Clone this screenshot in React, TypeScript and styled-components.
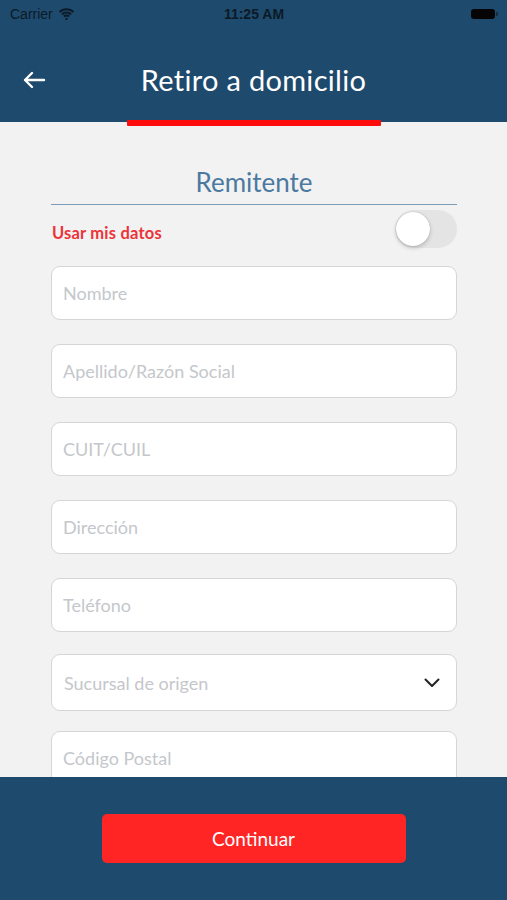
import React, { useState } from 'react';
import styled, { createGlobalStyle } from 'styled-components';

const GlobalStyle = createGlobalStyle`
  html, body {
    margin: 0;
    padding: 0;
    background: #f2f2f2;
  }
  * {
    box-sizing: border-box;
  }
`;

const Screen = styled.div`
  width: 100%;
  height: 100vh;
  display: flex;
  flex-direction: column;
  overflow: hidden;
  font-family: Lato, "Open Sans", sans-serif;
  background: #f2f2f2;
`;

const Header = styled.header`
  position: relative;
  background: #1e4a6e;
  height: 122px;
  flex-shrink: 0;
`;

const StatusBar = styled.div`
  height: 28px;
  display: grid;
  grid-template-columns: 1fr auto 1fr;
  align-items: center;
  padding: 0 9px 0 10px;
  font-family: "Liberation Sans", Arial, sans-serif;
  font-size: 14px;
  color: #0b1a26;
`;

const Carrier = styled.div`
  display: flex;
  align-items: center;
  gap: 5px;
`;

const Clock = styled.div`
  font-weight: 700;
  font-size: 14px;
`;

const Battery = styled.div`
  justify-self: end;
  display: flex;
  align-items: center;
  gap: 1px;
`;

const BatteryBody = styled.div`
  width: 24px;
  height: 10px;
  border-radius: 3px;
  background: #050505;
`;

const BatteryNub = styled.div`
  width: 2px;
  height: 4px;
  border-radius: 0 1px 1px 0;
  background: #0b1a26;
  opacity: 0.6;
`;

const NavBar = styled.div`
  height: 94px;
  display: flex;
  align-items: center;
  justify-content: center;
  position: relative;
  padding-top: 8px;
`;

const BackButton = styled.button`
  position: absolute;
  left: 22px;
  top: 43px;
  background: none;
  border: none;
  padding: 0;
  display: flex;
  cursor: pointer;
`;

const Title = styled.h1`
  margin: 0;
  font-weight: 400;
  font-size: 29px;
  color: #ffffff;
  letter-spacing: 0.3px;
`;

const ActiveTab = styled.div`
  position: absolute;
  left: 127px;
  width: 254px;
  bottom: -4px;
  height: 6px;
  background: #ff0d0d;
  border-radius: 1px;
  z-index: 2;
`;

const Content = styled.main`
  flex: 1;
  overflow: hidden;
  padding: 44px 50px 0 51px;
`;

const SectionTitle = styled.h2`
  margin: 0;
  text-align: center;
  font-size: 26px;
  line-height: 32px;
  font-weight: 400;
  color: #4b79a0;
  padding-bottom: 6px;
  border-bottom: 1.5px solid #7d9cb8;
`;

const ToggleRow = styled.div`
  display: flex;
  align-items: center;
  justify-content: space-between;
  margin-top: 4px;
  height: 39px;
`;

const ToggleLabel = styled.span`
  font-size: 16.5px;
  font-weight: 700;
  color: #ec3339;
  margin-top: 9px;
  padding-left: 1px;
  letter-spacing: 0.2px;
`;

const Switch = styled.button<{ $on: boolean }>`
  position: relative;
  width: 62px;
  height: 38px;
  border-radius: 19px;
  border: none;
  padding: 0;
  background: ${p => (p.$on ? '#4cd964' : '#e4e4e4')};
  cursor: pointer;
`;

const Knob = styled.span<{ $on: boolean }>`
  position: absolute;
  top: 2px;
  left: ${p => (p.$on ? '26px' : '1px')};
  width: 34px;
  height: 34px;
  border-radius: 50%;
  background: #ffffff;
  box-shadow: 0 2px 4px rgba(0, 0, 0, 0.2), 0 0 1px rgba(0, 0, 0, 0.25);
  transition: left 0.2s ease;
`;

const Fields = styled.div`
  display: flex;
  flex-direction: column;
  gap: 24px;
  margin-top: 18px;
`;

const Input = styled.input<{ $after?: boolean }>`
  width: 100%;
  height: 54px;
  flex-shrink: 0;
  margin-top: ${p => (p.$after ? '-4px' : '0')};
  border: 1px solid #d6d6d6;
  border-radius: 9px;
  background: #ffffff;
  padding: 0 11px;
  font-family: Lato, "Open Sans", sans-serif;
  font-size: 18px;
  color: #333;
  outline: none;

  &::placeholder {
    color: #c4c7cb;
  }
`;

const SelectBox = styled.div`
  height: 57px;
  flex-shrink: 0;
  margin-top: -2px;
  border: 1px solid #d6d6d6;
  border-radius: 9px;
  background: #ffffff;
  padding: 0 16px 0 12px;
  display: flex;
  align-items: center;
  justify-content: space-between;
  font-size: 18px;
  color: #c4c7cb;
`;

const Footer = styled.footer`
  height: 123px;
  flex-shrink: 0;
  background: #1e4a6e;
  display: flex;
  justify-content: center;
  padding-top: 37px;
`;

const PrimaryButton = styled.button`
  width: 304px;
  height: 49px;
  border: none;
  border-radius: 5px;
  background: #ff2525;
  color: #ffffff;
  font-family: Lato, "Open Sans", sans-serif;
  font-size: 19px;
  cursor: pointer;
`;

const placeholders = ['Nombre', 'Apellido/Razón Social', 'CUIT/CUIL', 'Dirección', 'Teléfono'];

export default function App() {
  const [useMine, setUseMine] = useState(false);

  return (
    <Screen>
      <GlobalStyle />
      <Header>
        <StatusBar>
          <Carrier>
            Carrier
            <svg width="17" height="12" viewBox="0 0 17 12">
              <path d="M8.5 2.2c2.4 0 4.6.9 6.3 2.5l1.3-1.4C14.1 1.4 11.4.3 8.5.3S2.9 1.4.9 3.3l1.3 1.4C3.9 3.1 6.1 2.2 8.5 2.2z" fill="#0b1a26" />
              <path d="M8.5 5.4c1.5 0 2.9.6 4 1.6l1.3-1.4C12.4 4.3 10.5 3.5 8.5 3.5S4.6 4.3 3.2 5.6L4.5 7c1.1-1 2.5-1.6 4-1.6z" fill="#0b1a26" />
              <path d="M8.5 8.4c.8 0 1.5.3 2 .8l1.3-1.4C11 7 9.8 6.6 8.5 6.6S6 7 5.2 7.8l1.3 1.4c.5-.5 1.2-.8 2-.8z M8.5 9.5 7 11l1.5 1.5L10 11z" fill="#0b1a26" />
            </svg>
          </Carrier>
          <Clock>11:25 AM</Clock>
          <Battery>
            <BatteryBody />
            <BatteryNub />
          </Battery>
        </StatusBar>
        <NavBar>
          <BackButton aria-label="Volver">
            <svg width="24" height="18" viewBox="0 0 24 18">
              <path d="M22 9H3M10 2 3 9l7 7" fill="none" stroke="#ffffff" strokeWidth="2.4" strokeLinecap="round" strokeLinejoin="round" />
            </svg>
          </BackButton>
          <Title>Retiro a domicilio</Title>
        </NavBar>
        <ActiveTab />
      </Header>

      <Content>
        <SectionTitle>Remitente</SectionTitle>
        <ToggleRow>
          <ToggleLabel>Usar mis datos</ToggleLabel>
          <Switch $on={useMine} onClick={() => setUseMine(v => !v)} aria-label="Usar mis datos">
            <Knob $on={useMine} />
          </Switch>
        </ToggleRow>
        <Fields>
          {placeholders.map(p => (
            <Input key={p} placeholder={p} />
          ))}
          <SelectBox>
            Sucursal de origen
            <svg width="16" height="10" viewBox="0 0 16 10">
              <path d="M1.5 1.5 8 8l6.5-6.5" fill="none" stroke="#222" strokeWidth="2" strokeLinecap="round" strokeLinejoin="round" />
            </svg>
          </SelectBox>
          <Input $after placeholder="Código Postal" />
        </Fields>
      </Content>

      <Footer>
        <PrimaryButton>Continuar</PrimaryButton>
      </Footer>
    </Screen>
  );
}
